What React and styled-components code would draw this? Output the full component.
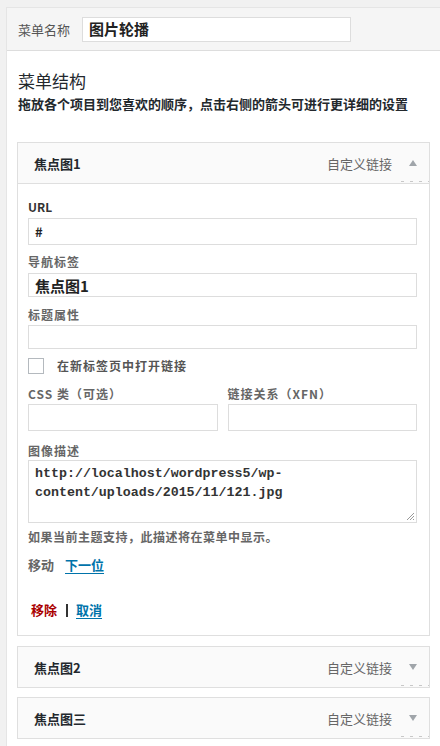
import styled, { createGlobalStyle } from 'styled-components'

const GlobalStyle = createGlobalStyle`
  * { box-sizing: border-box; }
  body {
    margin: 0;
    background: #f1f1f1;
    font-family: "Noto Sans CJK SC", "Noto Sans", sans-serif;
    color: #23282d;
  }
`

const Page = styled.div`
  padding: 7px 0 0 6px;
  height: 746px;
  overflow: hidden;
`

const Panel = styled.div`
  background: #fff;
  border-top: 1px solid #e5e5e5;
  border-left: 1px solid #e5e5e5;
  min-height: 760px;
`

const NameBar = styled.div`
  display: flex;
  align-items: center;
  gap: 12px;
  height: 43px;
  padding: 0 11px;
  background: #f5f5f5;
  border-bottom: 1px solid #dddddd;
`

const NameLabel = styled.span`
  font-size: 13px;
  color: #555;
`

const NameInput = styled.div`
  width: 269px;
  height: 25px;
  border: 1px solid #dddddd;
  background: #fff;
  padding: 0 6px;
  font-size: 15px;
  font-weight: 700;
  line-height: 22px;
  color: #222;
`

const Content = styled.div`
  padding: 0 10px;
`

const Heading = styled.h2`
  margin: 17px 0 0 1px;
  font-size: 17px;
  font-weight: 400;
  line-height: 26px;
  color: #23282d;
`

const Intro = styled.p`
  margin: 0 0 0 1px;
  font-size: 13px;
  font-weight: 700;
  line-height: 20px;
  white-space: nowrap;
  color: #23282d;
`

const Item = styled.div`
  width: 413px;
  margin-top: ${({ gap }) => gap}px;
`

const ItemHead = styled.div`
  position: relative;
  display: flex;
  align-items: center;
  height: 42px;
  padding: 0 12px 0 16px;
  background: #fafafa;
  border: 1px solid #dfdfdf;
`

const ItemTitle = styled.span`
  flex: 1;
  font-size: 13px;
  font-weight: 700;
  color: #23282d;
`

const ItemType = styled.span`
  font-size: 13px;
  color: #666;
  margin-right: 17px;
`

const Arrow = styled.span`
  width: 0;
  height: 0;
  border-left: 4px solid transparent;
  border-right: 4px solid transparent;
  ${({ up }) =>
    up ? 'border-bottom: 6px solid #a0a5aa;' : 'border-top: 6px solid #a0a5aa;'}
`

const Dots = styled.span`
  position: absolute;
  right: 0;
  bottom: 1px;
  width: 28px;
  height: 1px;
  background: repeating-linear-gradient(
    to right,
    #c8c8c8 0 3px,
    transparent 3px 9px
  );
`

const ItemBody = styled.div`
  display: flex;
  flex-direction: column;
  padding: 14px 12px 16px 10px;
  border: 1px solid #dfdfdf;
  border-top: none;
`

const Label = styled.div`
  font-size: 12px;
  font-weight: 700;
  line-height: 18px;
  color: ${({ dark }) => (dark ? '#333' : '#666')};
  margin-top: ${({ gap }) => gap || 0}px;
  letter-spacing: ${({ spaced }) => (spaced ? '1px' : '0')};
`

const Input = styled.div`
  height: ${({ h }) => h}px;
  margin-top: ${({ gap }) => gap || 0}px;
  border: 1px solid #dddddd;
  background: #fff;
  padding: 0 6px;
  display: flex;
  align-items: center;
  font-size: ${({ big }) => (big ? 15 : 13)}px;
  font-weight: 700;
  color: #222;
`

const CheckRow = styled.label`
  display: flex;
  align-items: center;
  gap: 13px;
  margin-top: 8px;
  font-size: 12px;
  font-weight: 700;
  color: #555;
  letter-spacing: 1px;
`

const Box = styled.span`
  width: 16px;
  height: 16px;
  border: 1px solid #b4b9be;
  background: #fff;
`

const Columns = styled.div`
  display: grid;
  grid-template-columns: 1fr 1fr;
  column-gap: 10px;
  margin-top: 11px;
`

const TextArea = styled.div`
  position: relative;
  height: 63px;
  border: 1px solid #dddddd;
  padding: 3px 6px;
  font-family: "Liberation Mono", "DejaVu Sans Mono", monospace;
  font-size: 13.3px;
  font-weight: 700;
  line-height: 19px;
  color: #333;
`

const Grip = styled.svg`
  position: absolute;
  right: 1px;
  bottom: 1px;
`

const Help = styled.p`
  margin: 5px 0 0;
  font-size: 12px;
  font-weight: 700;
  line-height: 18px;
  color: #666;
  letter-spacing: 0.5px;
`

const MoveRow = styled.div`
  display: flex;
  gap: 11px;
  margin-top: 10px;
  font-size: 13px;
  font-weight: 700;
  line-height: 18px;
  color: #666;
`

const Link = styled.a`
  color: ${({ danger }) => (danger ? '#a00' : '#0073aa')};
  text-decoration: ${({ danger }) => (danger ? 'none' : 'underline')};
  text-underline-offset: 3px;
  cursor: pointer;
`

const Actions = styled.div`
  display: flex;
  align-items: center;
  gap: 6px;
  margin: 27px 0 0 3px;
  font-size: 13px;
  font-weight: 700;
  line-height: 18px;
`

const Sep = styled.span`
  width: 2px;
  height: 13px;
  background: #333;
  margin: 0 2px 0 3px;
`

const MenuHead = ({ title, open }) => (
  <ItemHead>
    <ItemTitle>{title}</ItemTitle>
    <ItemType>自定义链接</ItemType>
    <Arrow up={open} />
    <Dots />
  </ItemHead>
)

export default function App() {
  return (
    <>
      <GlobalStyle />
      <Page>
        <Panel>
          <NameBar>
            <NameLabel>菜单名称</NameLabel>
            <NameInput>图片轮播</NameInput>
          </NameBar>
          <Content>
            <Heading>菜单结构</Heading>
            <Intro>拖放各个项目到您喜欢的顺序，点击右侧的箭头可进行更详细的设置</Intro>

            <Item gap={28}>
              <MenuHead title="焦点图1" open />
              <ItemBody>
                <Label dark>URL</Label>
                <Input h={27} gap={2}>#</Input>
                <Label gap={8} spaced>导航标签</Label>
                <Input h={24} gap={2} big>焦点图1</Input>
                <Label gap={9} spaced>标题属性</Label>
                <Input h={24} gap={1} />
                <CheckRow>
                  <Box />
                  在新标签页中打开链接
                </CheckRow>
                <Columns>
                  <div>
                    <Label spaced>CSS 类（可选）</Label>
                    <Input h={27} gap={1} />
                  </div>
                  <div>
                    <Label spaced>链接关系（XFN）</Label>
                    <Input h={27} gap={1} />
                  </div>
                </Columns>
                <Label gap={11} spaced>图像描述</Label>
                <TextArea>
                  http://localhost/wordpress5/wp-
                  <br />
                  content/uploads/2015/11/121.jpg
                  <Grip width="9" height="9" viewBox="0 0 9 9">
                    <path d="M8 1 L1 8 M8 4 L4 8 M8 7 L7 8" stroke="#999" strokeWidth="1" />
                  </Grip>
                </TextArea>
                <Help>如果当前主题支持，此描述将在菜单中显示。</Help>
                <MoveRow>
                  <span>移动</span>
                  <Link>下一位</Link>
                </MoveRow>
                <Actions>
                  <Link danger>移除</Link>
                  <Sep />
                  <Link>取消</Link>
                </Actions>
              </ItemBody>
            </Item>

            <Item gap={10}>
              <MenuHead title="焦点图2" />
            </Item>
            <Item gap={9}>
              <MenuHead title="焦点图三" />
            </Item>
          </Content>
        </Panel>
      </Page>
    </>
  )
}
